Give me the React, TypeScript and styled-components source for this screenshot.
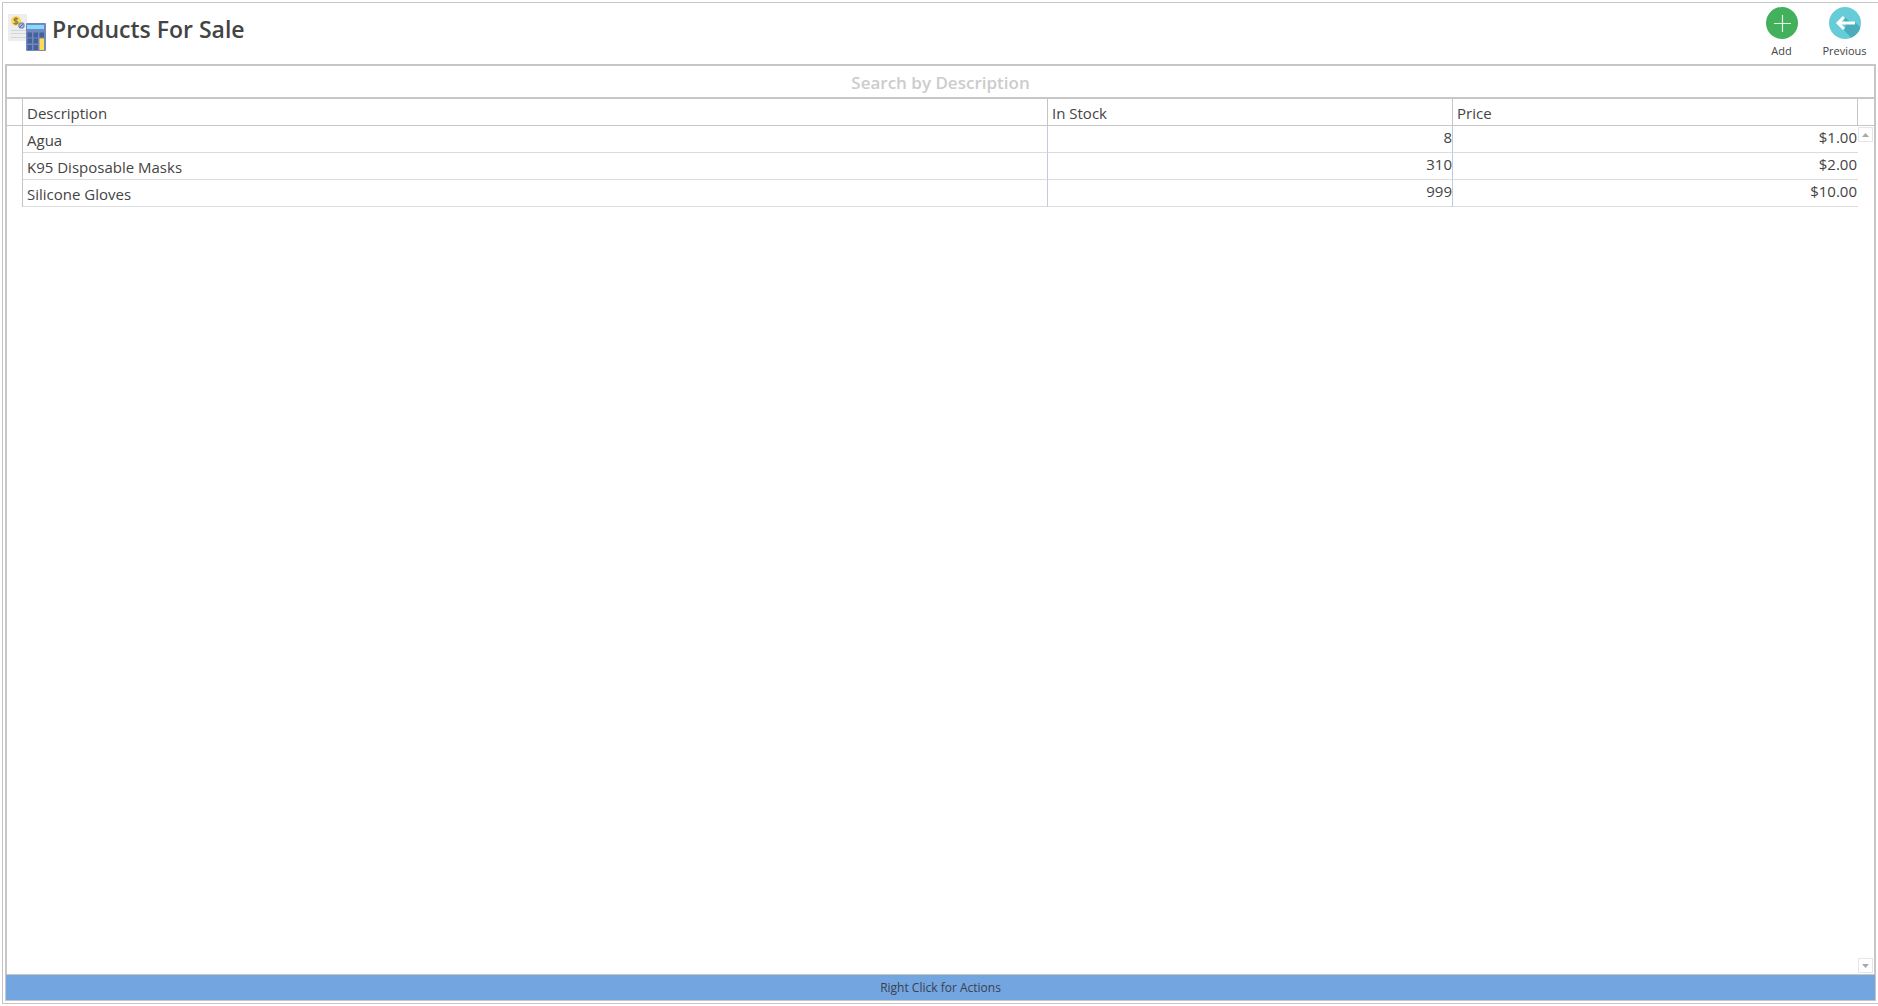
import React, { useState } from "react";
import styled, { createGlobalStyle } from "styled-components";

const line = "#c6c6c6";
const rowLine = "#dcdcdc";
const ink = "#444444";

const GlobalStyle = createGlobalStyle`
  *, *::before, *::after { box-sizing: border-box; }
  html, body, #root { height: 100%; }
  body {
    margin: 0;
    background: #fff;
    color: ${ink};
    font-family: "Segoe UI", "Open Sans", "Noto Sans", sans-serif;
    font-size: 15px;
  }
`;

const Page = styled.div`
  height: 100%;
  padding: 2px 0 2px 2px;
`;

const Frame = styled.main`
  display: flex;
  flex-direction: column;
  height: 100%;
  padding: 0 2px 2px;
  border: 1px solid ${line};
  border-right: 0;
`;

const TopBar = styled.header`
  display: flex;
  flex: none;
  justify-content: space-between;
  align-items: flex-start;
  height: 61px;
  padding: 4px 0 0 3px;
`;

const Heading = styled.div`
  display: flex;
  align-items: center;
  gap: 6px;
  padding-top: 7px;
`;

const Title = styled.h1`
  margin: 0;
  padding-bottom: 8px;
  font-size: 23px;
  font-weight: 600;
  line-height: 30px;
`;

const Actions = styled.nav`
  display: flex;
`;

const ActionButton = styled.button`
  display: flex;
  flex-direction: column;
  align-items: center;
  gap: 4px;
  width: 63px;
  padding: 0;
  border: 0;
  background: none;
  color: ${ink};
  font-family: inherit;
  font-size: 11px;
  line-height: 16px;
  cursor: pointer;
`;

const Panel = styled.section`
  display: flex;
  flex: 1;
  flex-direction: column;
  min-height: 0;
  border: 2px solid ${line};
  border-bottom: 0;
`;

const SearchInput = styled.input`
  flex: none;
  width: 100%;
  height: 33px;
  padding: 2px 0 0;
  border: 0;
  border-bottom: 2px solid ${line};
  outline: 0;
  background: #fff;
  color: ${ink};
  font-family: inherit;
  font-size: 17px;
  font-weight: 600;
  text-align: center;
  &::placeholder { color: #cccccc; opacity: 1; }
`;

const GridArea = styled.div`
  display: flex;
  flex: 1;
  min-height: 0;
`;

const TableWrap = styled.div`
  flex: 1;
  min-width: 0;
`;

const Table = styled.table`
  width: 100%;
  table-layout: fixed;
  border-collapse: separate;
  border-spacing: 0;
`;

const Col = styled.col<{ $w?: number }>`
  width: ${(p) => (p.$w ? `${p.$w}px` : "auto")};
`;

const HeadCell = styled.th`
  height: 27px;
  padding: 2px 4px 0;
  border-right: 1px solid ${line};
  border-bottom: 1px solid ${line};
  font-weight: 400;
  line-height: 24px;
  text-align: left;
`;

const SelectorCell = styled.td`
  padding: 0;
  border-right: 1px solid ${line};
`;

const TextCell = styled.td`
  height: 27px;
  padding: 2px 4px 0;
  border-right: 1px solid #c3cbd6;
  border-bottom: 1px solid ${rowLine};
  line-height: 24px;
`;

const NumberCell = styled.td<{ $last?: boolean }>`
  height: 27px;
  padding: 0 ${(p) => (p.$last ? "1px" : "0")} 4px 0;
  border-right: ${(p) => (p.$last ? "0" : "1px solid #bccbe0")};
  border-bottom: 1px solid ${rowLine};
  line-height: 22px;
  text-align: right;
`;

const ScrollColumn = styled.div`
  display: flex;
  flex: none;
  flex-direction: column;
  width: 16px;
`;

const ScrollCorner = styled.div`
  height: 27px;
  margin-bottom: 1px;
  border-bottom: 1px solid ${line};
`;

const ScrollButton = styled.button<{ $bottom?: boolean }>`
  display: flex;
  align-items: center;
  justify-content: center;
  width: 15px;
  height: 15px;
  margin: ${(p) => (p.$bottom ? "auto 0 1px" : "0")};
  padding: 0;
  border: 1px solid #e6e6e6;
  background: #fff;
`;

const Footer = styled.footer`
  flex: none;
  height: 27px;
  border: 1px solid ${line};
  background: #73a5e1;
  color: #3a414b;
  font-size: 12px;
  line-height: 25px;
  text-align: center;
`;

const ProductsIcon = () => (
  <svg width="38" height="38" viewBox="0 0 38 38" aria-hidden="true">
    <path fill="#eceef0" d="M0 0h19v27H0z" />
    <path stroke="#d3d6da" d="M3 16.5h15M3 19.5h15M3 23.5h15" />
    <circle cx="8" cy="7" r="5" fill="#ffdb4d" />
    <path
      fill="none"
      stroke="#8a7f55"
      strokeWidth="1.3"
      d="M10 5.2C9.6 4.3 6 4 6 5.800S10 7 10 8.500 6.400 10.300 5.700 8.900M8 3v8"
    />
    <circle cx="13.500" cy="11.500" r="2.600" fill="#a9b5d6" stroke="#7b8cbd" strokeWidth="1.200" />
    <path stroke="#5d70a5" d="M11.500 13.500l4-4" />
    <rect x="18" y="9" width="20" height="28" rx="1" fill="#7189bf" />
    <path fill="#84dbff" d="M19 11h17v4H19z" />
    <path
      fill="#48609a"
      d="M19.500 18.500h4.500v5h-4.500zM25.500 18.500h4.500v5h-4.500zM31.500 18.500h4.500v5h-4.500zM19.500 24.500h4.500v5h-4.500zM25.500 24.500h4.500v5h-4.500zM19.500 31h4.500v5h-4.500zM25.500 31h4.500v5h-4.500z"
    />
    <path fill="#ffdb4d" d="M31.500 24.500h4.500v11.500h-4.500z" />
  </svg>
);

const AddIcon = () => (
  <svg width="32" height="32" viewBox="0 0 32 32" aria-hidden="true">
    <circle cx="16" cy="16" r="16" fill="#43b05c" />
    <path stroke="#e4f4e7" strokeWidth="1.2" d="M16.500 8v17M8 16.500h17" />
  </svg>
);

const PreviousIcon = () => (
  <svg width="32" height="32" viewBox="0 0 32 32" aria-hidden="true">
    <defs>
      <clipPath id="disc">
        <circle cx="16" cy="16" r="16" />
      </clipPath>
    </defs>
    <circle cx="16" cy="16" r="16" fill="#66cdd8" />
    <path clipPath="url(#disc)" fill="#4badba" d="M16 10l5 5h5l8 8v11H25L15 23l2-5-2-6z" />
    <path fill="none" stroke="#fff" strokeWidth="3" d="M26 16H9M15 10l-6 6 6 6" />
  </svg>
);

const Arrow = ({ down }: { down?: boolean }) => (
  <svg width="7" height="4" viewBox="0 0 7 4" aria-hidden="true">
    <path fill="#a8a8a8" d={down ? "M0 0h7L3.500 4z" : "M0 4h7L3.500 0z"} />
  </svg>
);

const products = [
  { description: "Agua", stock: 8, price: 1 },
  { description: "K95 Disposable Masks", stock: 310, price: 2 },
  { description: "Silicone Gloves", stock: 999, price: 10 },
];

export default function App() {
  const [query, setQuery] = useState("");
  const rows = products.filter((p) =>
    p.description.toLowerCase().includes(query.toLowerCase())
  );

  return (
    <Page>
      <GlobalStyle />
      <Frame>
        <TopBar>
          <Heading>
            <ProductsIcon />
            <Title>Products For Sale</Title>
          </Heading>
          <Actions>
            <ActionButton type="button">
              <AddIcon />
              Add
            </ActionButton>
            <ActionButton type="button">
              <PreviousIcon />
              Previous
            </ActionButton>
          </Actions>
        </TopBar>
        <Panel>
          <SearchInput
            type="text"
            aria-label="Search by Description"
            placeholder="Search by Description"
            value={query}
            onChange={(e) => setQuery(e.target.value)}
          />
          <GridArea>
            <TableWrap>
              <Table>
                <colgroup>
                  <Col $w={16} />
                  <Col />
                  <Col $w={405} />
                  <Col $w={405} />
                </colgroup>
                <thead>
                  <tr>
                    <HeadCell />
                    <HeadCell scope="col">Description</HeadCell>
                    <HeadCell scope="col">In Stock</HeadCell>
                    <HeadCell scope="col">Price</HeadCell>
                  </tr>
                </thead>
                <tbody>
                  {rows.map((p) => (
                    <tr key={p.description}>
                      <SelectorCell />
                      <TextCell>{p.description}</TextCell>
                      <NumberCell>{p.stock}</NumberCell>
                      <NumberCell $last>${p.price.toFixed(2)}</NumberCell>
                    </tr>
                  ))}
                </tbody>
              </Table>
            </TableWrap>
            <ScrollColumn>
              <ScrollCorner />
              <ScrollButton type="button" aria-label="Scroll up">
                <Arrow />
              </ScrollButton>
              <ScrollButton type="button" aria-label="Scroll down" $bottom>
                <Arrow down />
              </ScrollButton>
            </ScrollColumn>
          </GridArea>
        </Panel>
        <Footer>Right Click for Actions</Footer>
      </Frame>
    </Page>
  );
}
